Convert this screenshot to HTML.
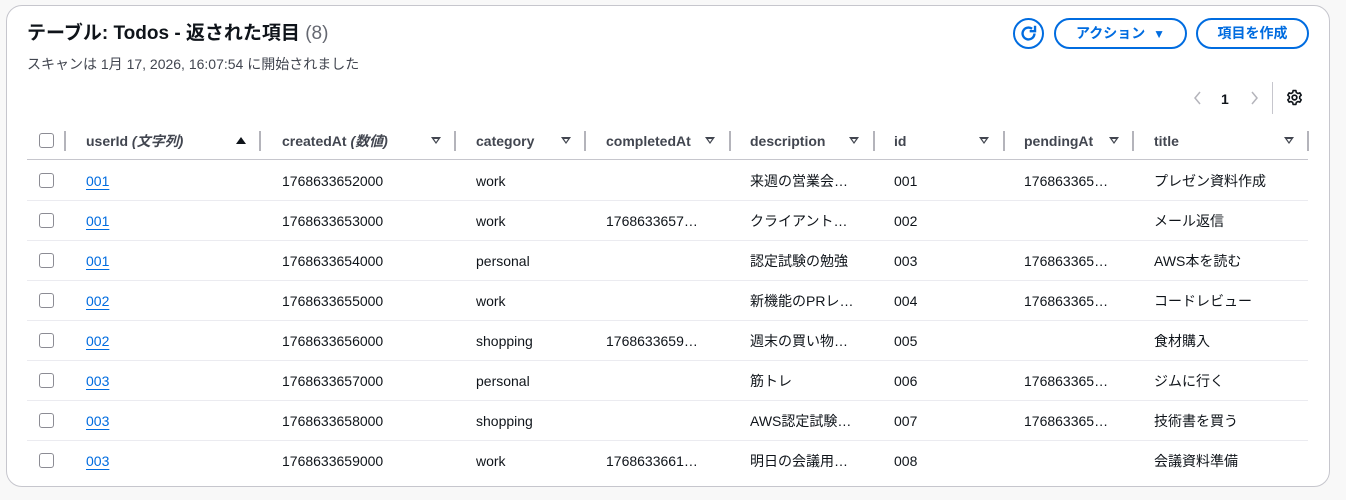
<!DOCTYPE html>
<html><head><meta charset="utf-8"><style>
*{box-sizing:border-box;margin:0;padding:0}
body{width:1346px;height:500px;background:#f8f8f8;font-family:"Liberation Sans","Noto Sans CJK JP",sans-serif;color:#0f141a;position:relative;overflow:hidden}
.card{position:absolute;left:6px;top:5px;width:1324px;height:482px;background:#fff;border:1px solid #c6c6cd;border-radius:16px}
.a{position:absolute;white-space:nowrap}
.t{font-size:14px;line-height:18px}
.h{font-weight:bold;color:#424650;font-size:14px;line-height:18px}
.cb{position:absolute;left:39px;width:15px;height:15px;border:1.5px solid #8c8c94;border-radius:3px;background:#fff}
.div{position:absolute;top:131px;width:2px;height:20px;background:#b4b4bb}
.tri{position:absolute;top:137px;width:0;height:0;border-left:5px solid transparent;border-right:5px solid transparent;border-top:7px solid #424650}
.tri::after{content:"";position:absolute;left:-2px;top:-5.5px;border-left:2px solid transparent;border-right:2px solid transparent;border-top:3px solid #fff}
.line{position:absolute;left:27px;width:1281px;height:1px;background:#ebebf0}
.lnk{color:#006ce0;text-decoration:underline;text-underline-offset:3px}
.btn{position:absolute;top:18px;height:31px;border:2px solid #006ce0;border-radius:16px;color:#006ce0;font-weight:bold;font-size:14px;line-height:27px;text-align:center}
</style></head><body>
<div class="card"></div>
<div class="a" style="left:27px;top:20px;font-size:19px;line-height:28px;font-weight:bold">テーブル: Todos - 返された項目 <span style="font-weight:normal;color:#656871">(8)</span></div>
<div class="a" style="left:27px;top:55px;font-size:14px;line-height:18px;color:#424650">スキャンは 1月 17, 2026, 16:07:54 に開始されました</div>

<div class="a" style="left:1013px;top:18px;width:31px;height:31px;border:2px solid #006ce0;border-radius:50%"></div>
<svg class="a" style="left:1019px;top:24px" width="19" height="19" viewBox="0 0 16 16"><path d="M13 8a5 5 0 1 1-2-4" fill="none" stroke="#006ce0" stroke-width="2"/><path d="M13.5 1.5v4.5h-4.5" fill="none" stroke="#006ce0" stroke-width="2"/></svg>
<div class="btn" style="left:1054px;width:133px">アクション&nbsp;&nbsp;<span style="font-size:12px">▼</span></div>
<div class="btn" style="left:1196px;width:113px">項目を作成</div>

<svg class="a" style="left:1192px;top:90px" width="12" height="16"><path d="M8 2L3 8l5 6" fill="none" stroke="#b4b4bb" stroke-width="1.5"/></svg>
<div class="a t" style="left:1221px;top:90px;font-weight:bold">1</div>
<svg class="a" style="left:1248px;top:90px" width="12" height="16"><path d="M4 2l5 6-5 6" fill="none" stroke="#b4b4bb" stroke-width="1.5"/></svg>
<div class="a" style="left:1272px;top:82px;width:1px;height:32px;background:#c6c6cd"></div>
<svg class="a" style="left:1286px;top:89px" width="17" height="17" viewBox="0 0 16 16"><circle cx="8" cy="8" r="2.2" fill="none" stroke="#0f141a" stroke-width="1.6"/><path d="M6.7 1.5h2.6l.4 1.8 1.5.9 1.8-.6 1.3 2.2-1.4 1.3v1.8l1.4 1.3-1.3 2.2-1.8-.6-1.5.9-.4 1.8H6.7l-.4-1.8-1.5-.9-1.8.6-1.3-2.2 1.4-1.3V7.1L1.7 5.8 3 3.6l1.8.6 1.5-.9z" fill="none" stroke="#0f141a" stroke-width="1.5" stroke-linejoin="round"/></svg>

<div class="cb" style="top:133px"></div>
<div class="div" style="left:64px"></div>
<div class="a h" style="left:86px;top:132px">userId <i>(文字列)</i></div>
<div class="a" style="left:236px;top:137px;border-left:5px solid transparent;border-right:5px solid transparent;border-bottom:7px solid #0f141a"></div>
<div class="div" style="left:259px"></div>
<div class="a h" style="left:282px;top:132px">createdAt <i>(数値)</i></div>
<div class="tri" style="left:431px"></div><div class="div" style="left:454px"></div>
<div class="a h" style="left:476px;top:132px">category</div>
<div class="tri" style="left:561px"></div><div class="div" style="left:584px"></div>
<div class="a h" style="left:606px;top:132px">completedAt</div>
<div class="tri" style="left:705px"></div><div class="div" style="left:729px"></div>
<div class="a h" style="left:750px;top:132px">description</div>
<div class="tri" style="left:849px"></div><div class="div" style="left:873px"></div>
<div class="a h" style="left:894px;top:132px">id</div>
<div class="tri" style="left:979px"></div><div class="div" style="left:1003px"></div>
<div class="a h" style="left:1024px;top:132px">pendingAt</div>
<div class="tri" style="left:1109px"></div><div class="div" style="left:1132px"></div>
<div class="a h" style="left:1154px;top:132px">title</div>
<div class="tri" style="left:1284px"></div><div class="div" style="left:1307px"></div>
<div class="line" style="top:159px;background:#c6c6cd"></div>

<div id="rows"></div>
<script>
var d=[["001","1768633652000","work","","来週の営業会…","001","176863365…","プレゼン資料作成"],
["001","1768633653000","work","1768633657…","クライアント…","002","","メール返信"],
["001","1768633654000","personal","","認定試験の勉強","003","176863365…","AWS本を読む"],
["002","1768633655000","work","","新機能のPRレ…","004","176863365…","コードレビュー"],
["002","1768633656000","shopping","1768633659…","週末の買い物…","005","","食材購入"],
["003","1768633657000","personal","","筋トレ","006","176863365…","ジムに行く"],
["003","1768633658000","shopping","","AWS認定試験…","007","176863365…","技術書を買う"],
["003","1768633659000","work","1768633661…","明日の会議用…","008","","会議資料準備"]];
var xs=[86,282,476,606,750,894,1024,1154],h="";
d.forEach(function(r,i){var y=172+i*40;
h+='<div class="cb" style="top:'+(y+1)+'px"></div>';
r.forEach(function(c,j){h+='<div class="a t'+(j==0?' lnk':'')+'" style="left:'+xs[j]+'px;top:'+y+'px">'+c+'</div>';});
if(i<7)h+='<div class="line" style="top:'+(y+28)+'px"></div>';});
document.getElementById("rows").innerHTML=h;
</script>
</body></html>
